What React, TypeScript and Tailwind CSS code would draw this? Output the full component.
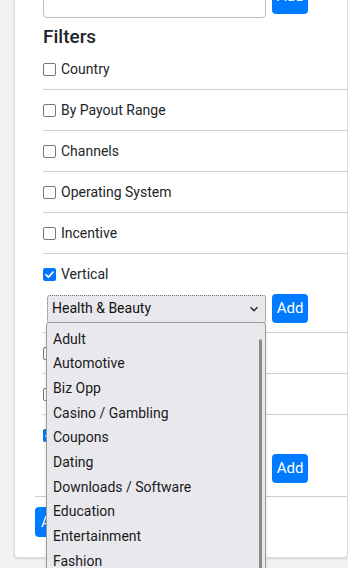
import React from 'react';

const verticals = [
  'Adult',
  'Automotive',
  'Biz Opp',
  'Casino / Gambling',
  'Coupons',
  'Dating',
  'Downloads / Software',
  'Education',
  'Entertainment',
  'Fashion',
  'Finance',
];

const Checkbox: React.FC<{ checked?: boolean }> = ({ checked }) =>
  checked ? (
    <span className="w-[13px] h-[13px] rounded-[2px] bg-[#0075ff] flex items-center justify-center shrink-0">
      <svg width="11" height="11" viewBox="0 0 12 12">
        <path d="M2.2 6.3l2.6 2.6 5-5.4" fill="none" stroke="#fff" strokeWidth="1.9" strokeLinecap="round" strokeLinejoin="round" />
      </svg>
    </span>
  ) : (
    <span className="w-[13px] h-[13px] rounded-[2px] border border-[#767676] bg-white shrink-0" />
  );

const AddButton: React.FC<{ className?: string }> = ({ className = '' }) => (
  <button className={`w-[36px] rounded-[4px] bg-[#007bff] text-white text-[15px] leading-none flex items-center justify-center ${className}`}>
    Add
  </button>
);

const FilterRow: React.FC<{ label?: string; last?: boolean }> = ({ label, last }) => (
  <div className={`py-[10px] ${last ? '' : 'border-b border-[#cfcfcf]'}`}>
    <label className="flex items-center gap-[5px] h-[20px] text-[14px] text-[#212529]">
      <Checkbox />
      {label}
    </label>
  </div>
);

const SelectBox: React.FC<{ value?: string }> = ({ value }) => (
  <div className="flex-1 h-[28px] rounded-[3px] border border-dotted border-[#6d6d6d] bg-[#e9e9ed] flex items-center justify-between pl-[4px] pr-[6px] text-[14px] text-[#111]">
    <span>{value}</span>
    <svg width="10" height="10" viewBox="0 0 10 10">
      <path d="M1.5 3.2l3.5 3.5 3.5-3.5" fill="none" stroke="#222" strokeWidth="1.4" />
    </svg>
  </div>
);

export default function App() {
  return (
    <div className="w-[348px] h-[568px] overflow-hidden bg-[#f2f2f4]" style={{ fontFamily: 'Roboto, "Liberation Sans", sans-serif' }}>
      <div className="ml-[14px] mt-[-60px] bg-white border border-[#dcdcdc] rounded-b-[4px] shadow-sm pl-[20px] pb-[20px]">
        <div className="pl-[8px] pt-[38px]">
          <div className="flex items-start gap-[6px]">
            <div className="w-[223px] h-[39px] rounded-[4px] border border-[#bdbdbd] bg-white" />
            <AddButton className="h-[35px]" />
          </div>
          <h5 className="mt-[7px] text-[19px] font-medium text-[#212529] leading-[24px]">Filters</h5>
          <div className="mr-[-20px]">
            <FilterRow label="Country" />
            <FilterRow label="By Payout Range" />
            <FilterRow label="Channels" />
            <FilterRow label="Operating System" />
            <FilterRow label="Incentive" />

            <div className="pt-[10px] pb-[9px] border-b border-[#cfcfcf] relative">
              <label className="flex items-center gap-[5px] h-[20px] text-[14px] text-[#212529]">
                <Checkbox checked />
                Vertical
              </label>
              <div className="mt-[10px] flex items-center gap-[6px] pl-[4px] w-[265px]">
                <SelectBox value="Health & Beauty" />
                <AddButton className="h-[29px]" />
              </div>

              {/* open dropdown list */}
              <div className="absolute left-[3px] top-[68px] z-20 w-[220px] h-[260px] bg-[#e9e9ed] border border-[#9a9a9a] rounded-t-[3px] pt-[4px] pl-[6px] shadow-md">
                {verticals.map((v) => (
                  <div key={v} className="h-[24.67px] flex items-center text-[14px] text-[#1a1a1a]">
                    {v}
                  </div>
                ))}
                <div className="absolute right-[3px] top-[16px] bottom-0 w-[3px] rounded-full bg-[#8a8a8a]" />
              </div>
            </div>

            {/* rows hidden behind the open list */}
            <FilterRow />
            <FilterRow />

            <div className="pt-[10px] pb-[13px]">
              <label className="flex items-center gap-[5px] h-[20px] text-[14px] text-[#212529]">
                <Checkbox checked />
              </label>
              <div className="mt-[9px] flex items-center gap-[6px] pl-[4px] w-[265px]">
                <SelectBox />
                <AddButton className="h-[29px]" />
              </div>
            </div>
          </div>
        </div>
        <div className="border-t border-[#cfcfcf] pt-[10px]">
          <button className="h-[30px] w-[40px] px-[6px] rounded-[4px] bg-[#007bff] text-white text-[15px] text-left">A</button>
        </div>
      </div>
    </div>
  );
}
